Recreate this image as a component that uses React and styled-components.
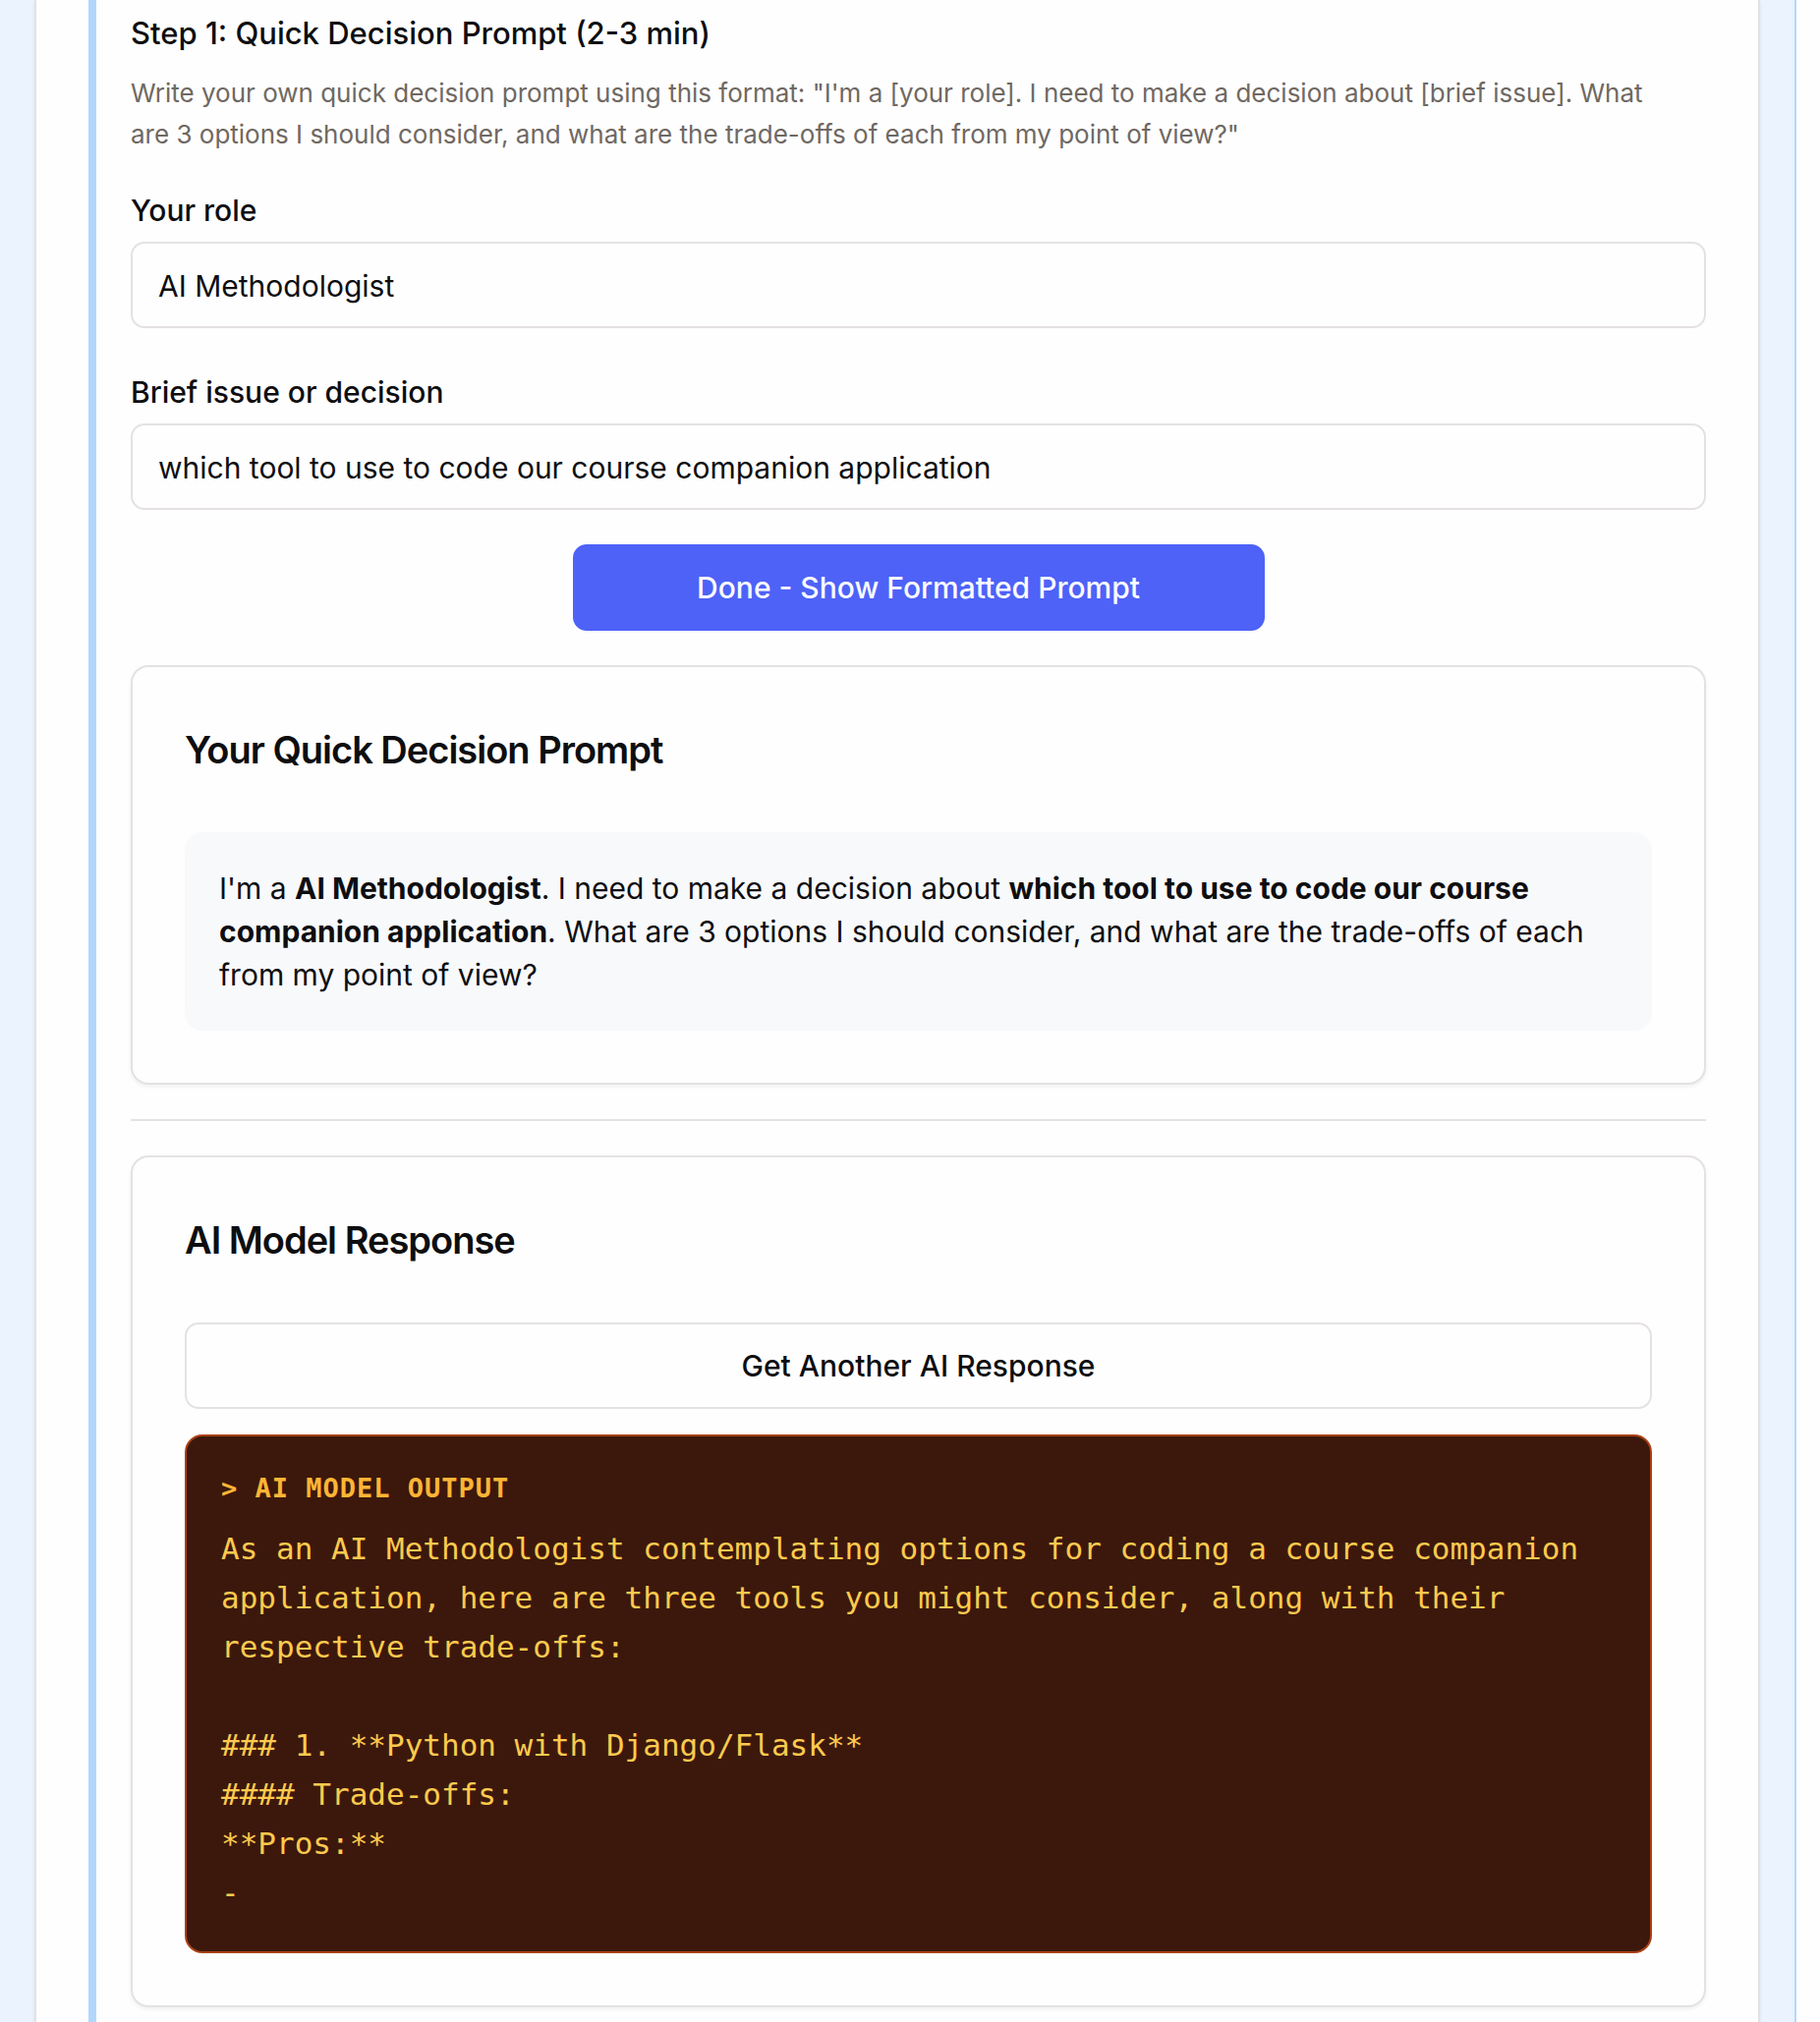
import React, { useState } from "react";
import styled, { createGlobalStyle } from "styled-components";

const color = {
  text: "#0e0e10",
  muted: "#6f6862",
  border: "#e5e1e2",
  surface: "#fefefe",
  sky: "#eaf3fe",
  skyLine: "#b2d7fd",
  primary: "#4e62f8",
};

const mono = `"DejaVu Sans Mono", "Liberation Mono", monospace`;

const GlobalStyle = createGlobalStyle`
  *, *::before, *::after { box-sizing: border-box; }
  body {
    margin: 0;
    background: ${color.surface};
    color: ${color.text};
    font-family: Inter, "Liberation Sans", sans-serif;
    font-size: 30px;
    line-height: 44px;
  }
`;

const Page = styled.div`
  display: flex;
  min-height: 100vh;
  padding-right: 24px;
`;

const Section = styled.section`
  flex: 1;
  display: flex;
  min-width: 0;
  padding: 0 35px;
  background: ${color.sky};
  border-right: 2px solid ${color.skyLine};
`;

const Panel = styled.div`
  flex: 1;
  min-width: 0;
  display: flex;
  padding: 0 53px;
  background: ${color.surface};
  border: solid ${color.border};
  border-width: 0 2px;
  box-shadow: 0 2px 4px rgba(0, 0, 0, 0.06);
`;

const Step = styled.form`
  flex: 1;
  min-width: 0;
  display: flex;
  flex-direction: column;
  gap: 35px;
  padding: 12px 0 16px 35px;
  border-left: 8px solid ${color.skyLine};
`;

const Intro = styled.header`
  display: flex;
  flex-direction: column;
  gap: 18px;
`;

const StepTitle = styled.h3`
  margin: 0;
  font-size: 31px;
  font-weight: 500;
  line-height: 44px;
`;

const Description = styled.p`
  margin: 0;
  padding-right: 35px;
  color: ${color.muted};
  font-size: 26px;
  line-height: 42px;
`;

const Fields = styled.div`
  display: flex;
  flex-direction: column;
  gap: 44px;
`;

const Field = styled.div`
  display: flex;
  flex-direction: column;
  gap: 11px;
`;

const Label = styled.label`
  font-weight: 500;
  line-height: 42px;
`;

const TextInput = styled.input`
  width: 100%;
  height: 88px;
  padding: 2px 26px 0;
  border: 2px solid ${color.border};
  border-radius: 14px;
  background: ${color.surface};
  color: inherit;
  font: inherit;
`;

const Button = styled.button`
  align-self: ${(p) => (p.$primary ? "center" : "stretch")};
  width: ${(p) => (p.$primary ? "704px" : "auto")};
  max-width: 100%;
  height: 88px;
  border: 2px solid ${(p) => (p.$primary ? color.primary : color.border)};
  border-radius: 14px;
  background: ${(p) => (p.$primary ? color.primary : color.surface)};
  color: ${(p) => (p.$primary ? "#fafaff" : color.text)};
  font: inherit;
  font-weight: 500;
  cursor: pointer;
`;

const Card = styled.article`
  display: flex;
  flex-direction: column;
  gap: 53px;
  padding: 53px;
  border: 2px solid ${color.border};
  border-radius: 18px;
  box-shadow: 0 2px 4px rgba(0, 0, 0, 0.06);
`;

const CardTitle = styled.h4`
  margin: 0;
  font-size: 38px;
  font-weight: 600;
  line-height: 62px;
  letter-spacing: -1px;
`;

const PromptBox = styled.p`
  margin: 0;
  padding: 35px;
  border-radius: 18px;
  background: #f8f9fb;

  strong { font-weight: 700; }
`;

const Divider = styled.hr`
  width: 100%;
  margin: 0;
  border: 0;
  border-top: 2px solid ${color.border};
`;

const CardBody = styled.div`
  display: flex;
  flex-direction: column;
  gap: 26px;
`;

const Terminal = styled.div`
  display: flex;
  flex-direction: column;
  gap: 18px;
  padding: 35px;
  border: 2px solid #a94014;
  border-radius: 18px;
  background: #3c180c;
  color: #fdca4e;
  font-family: ${mono};
`;

const TerminalLabel = styled.div`
  color: #fdb535;
  font-size: 27px;
  font-weight: 700;
  line-height: 36px;
  letter-spacing: 1px;
`;

const Output = styled.pre`
  margin: 0;
  font-family: inherit;
  font-size: 31px;
  line-height: 50px;
  white-space: pre-wrap;
`;

const response = `As an AI Methodologist contemplating options for coding a course companion application, here are three tools you might consider, along with their respective trade-offs:

### 1. **Python with Django/Flask**
#### Trade-offs:
**Pros:**
-`;

export default function App() {
  const [role, setRole] = useState("AI Methodologist");
  const [issue, setIssue] = useState(
    "which tool to use to code our course companion application"
  );

  return (
    <>
      <GlobalStyle />
      <Page>
        <Section>
          <Panel>
            <Step onSubmit={(e) => e.preventDefault()}>
              <Intro>
                <StepTitle>Step 1: Quick Decision Prompt (2-3 min)</StepTitle>
                <Description>
                  Write your own quick decision prompt using this format: "I'm a
                  [your role]. I need to make a decision about [brief issue].
                  What are 3 options I should consider, and what are the
                  trade-offs of each from my point of view?"
                </Description>
              </Intro>
              <Fields>
                <Field>
                  <Label htmlFor="role">Your role</Label>
                  <TextInput
                    id="role"
                    type="text"
                    value={role}
                    onChange={(e) => setRole(e.target.value)}
                  />
                </Field>
                <Field>
                  <Label htmlFor="issue">Brief issue or decision</Label>
                  <TextInput
                    id="issue"
                    type="text"
                    value={issue}
                    onChange={(e) => setIssue(e.target.value)}
                  />
                </Field>
              </Fields>
              <Button $primary type="submit">
                Done - Show Formatted Prompt
              </Button>
              <Card>
                <CardTitle>Your Quick Decision Prompt</CardTitle>
                <PromptBox>
                  I'm a <strong>{role}</strong>. I need to make a decision about{" "}
                  <strong>{issue}</strong>. What are 3 options I should
                  consider, and what are the trade-offs of each from my point of
                  view?
                </PromptBox>
              </Card>
              <Divider />
              <Card>
                <CardTitle>AI Model Response</CardTitle>
                <CardBody>
                  <Button type="button">Get Another AI Response</Button>
                  <Terminal>
                    <TerminalLabel>&gt; AI MODEL OUTPUT</TerminalLabel>
                    <Output>{response}</Output>
                  </Terminal>
                </CardBody>
              </Card>
            </Step>
          </Panel>
        </Section>
      </Page>
    </>
  );
}
